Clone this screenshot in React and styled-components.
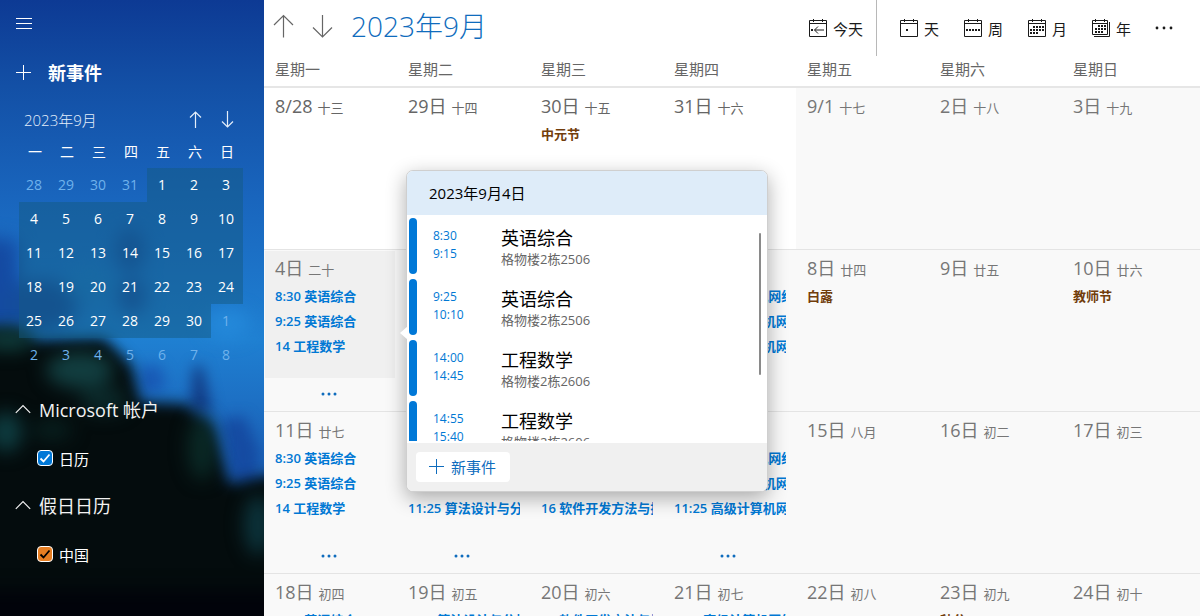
import React, { useState } from "react";
import styled, { createGlobalStyle } from "styled-components";

const GlobalStyle = createGlobalStyle`
  *, *::before, *::after { box-sizing: border-box; }
  body {
    margin: 0;
    background: #fff;
    font-family: "Open Sans", "Noto Sans CJK SC", sans-serif;
    font-size: 15px;
    color: #1a1a1a;
  }
  button {
    font: inherit;
    color: inherit;
    background: none;
    border: 0;
    padding: 0;
    cursor: pointer;
  }
`;

const Page = styled.div`
  display: flex;
  height: 100vh;
  overflow: hidden;
`;

/* ---------- sidebar ---------- */

const Sidebar = styled.aside`
  position: relative;
  flex: 0 0 264px;
  overflow: hidden;
  color: #fff;
  background: #02070c;
`;

const Backdrop = styled.svg`
  position: absolute;
  inset: 0;
  width: 100%;
  height: 100%;
`;

const SidebarBody = styled.div`
  position: relative;
  display: flex;
  flex-direction: column;
`;

const MenuButton = styled.button`
  display: flex;
  align-items: center;
  width: 48px;
  height: 48px;
  padding-left: 16px;
`;

const NewEvent = styled.button`
  display: flex;
  align-items: center;
  gap: 17px;
  height: 48px;
  padding-left: 16px;
  font-size: 18px;
  font-weight: 700;
`;

const MiniHeader = styled.div`
  display: flex;
  align-items: center;
  height: 36px;
  margin-top: 5px;
  padding: 0 21px 0 24px;
  color: #e4eefa;
`;

const MiniTitle = styled.span`
  flex: 1;
  font-weight: 300;
`;

const MiniArrow = styled.button`
  display: flex;
  align-items: center;
  justify-content: center;
  width: 32px;
  height: 32px;
`;

const MiniGrid = styled.div`
  display: grid;
  grid-template-columns: repeat(7, 32px);
  margin-left: 19px;
`;

const MiniWeekday = styled.span`
  height: 31px;
  line-height: 30px;
  text-align: center;
  font-size: 14px;
`;

const MiniDay = styled.button`
  height: 34px;
  padding-right: 2px;
  line-height: 34px;
  text-align: center;
  font-size: 14px;
  color: ${(p) => (p.$current ? "#fff" : "#6fb2ec")};
  background: ${(p) => (p.$current ? "rgba(20, 90, 130, 0.5)" : "transparent")};
`;

const Accounts = styled.div`
  margin-top: 14px;
`;

const AccountHeader = styled.button`
  display: flex;
  align-items: center;
  gap: 8px;
  width: 100%;
  height: 48px;
  padding: 0 0 2px 15px;
  font-size: 18px;
  color: #f2f2f2;
`;

const CalendarOption = styled.label`
  display: flex;
  align-items: center;
  gap: 6px;
  height: 48px;
  padding-left: 37px;
  font-size: 15px;
`;

const CheckWrap = styled.span`
  position: relative;
  display: flex;
  width: 16px;
  height: 16px;
`;

const Check = styled.input`
  appearance: none;
  width: 16px;
  height: 16px;
  margin: 0;
  border: 1px solid #fff;
  border-radius: 4px;
  background: transparent;
  &:checked { background: ${(p) => p.$color}; }
  &:not(:checked) + svg { display: none; }
`;

const CheckMark = styled.svg`
  position: absolute;
  inset: 0;
  pointer-events: none;
`;

/* ---------- main area ---------- */

const Main = styled.main`
  flex: 1;
  min-width: 0;
  display: flex;
  flex-direction: column;
`;

const Toolbar = styled.header`
  display: flex;
  align-items: stretch;
  flex: 0 0 56px;
  padding: 0 22px 0 9px;
`;

const NavButton = styled.button`
  display: flex;
  align-items: center;
  width: 39px;
  padding-bottom: 4px;
`;

const MonthTitle = styled.h1`
  flex: 1;
  margin: 0;
  line-height: 52px;
  font-size: 28px;
  font-weight: 300;
  color: #0f6cbd;
`;

const ToolButton = styled.button`
  display: flex;
  align-items: center;
  gap: 5px;
`;

const TodayBox = styled.div`
  display: flex;
  padding-right: 13px;
  border-right: 1px solid #b8b8b8;
`;

const Views = styled.div`
  display: flex;
  gap: 24px;
  padding: 0 19px 0 22px;
`;

const MoreButton = styled.button`
  display: flex;
  align-items: center;
  justify-content: center;
  width: 28px;
`;

const WeekdayRow = styled.div`
  display: grid;
  grid-template-columns: repeat(7, 1fr);
  flex: 0 0 32px;
  padding-right: 5px;
  border-bottom: 2px solid #e6e6e6;
`;

const Weekday = styled.div`
  padding-left: 11px;
  line-height: 26px;
  color: #666;
`;

const Week = styled.div`
  display: grid;
  grid-template-columns: repeat(7, 1fr);
  flex: 0 0 162px;
  padding-right: 5px;
  background: #f9f9f9;
  border-bottom: 1px solid #e4e4e4;
`;

const DayCell = styled.div`
  position: relative;
  min-width: 0;
  display: flex;
  flex-direction: column;
  background: ${(p) => (p.$shown ? "#fff" : "transparent")};
`;

const DayBody = styled.div`
  flex: 0 0 127px;
  margin: 1px 2px 0 1px;
  padding: 0 8px 0 10px;
  background: ${(p) => (p.$selected ? "#f0f0f0" : "transparent")};
`;

const DayHeading = styled.div`
  display: flex;
  align-items: baseline;
  gap: 5px;
  height: 33px;
  line-height: 34px;
  font-size: 18px;
  color: ${(p) => (p.$shown ? "#666" : "#767676")};
`;

const Lunar = styled.span`
  font-size: 13px;
`;

const Entry = styled.div`
  height: 25px;
  line-height: 25px;
  overflow: hidden;
  white-space: nowrap;
  font-size: 13px;
  font-weight: 600;
  color: ${(p) => (p.$holiday ? "#713d0b" : "#0078d4")};
`;

const MoreEntries = styled.button`
  display: flex;
  align-items: center;
  justify-content: center;
  height: 32px;
  padding-right: 3px;
  color: #0f6cbd;
`;

/* ---------- day popover ---------- */

const Popover = styled.section`
  position: absolute;
  z-index: 2;
  top: -80px;
  left: calc(100% + 9px);
  width: 362px;
  border: 1px solid #cfcfcf;
  border-radius: 7px;
  background: #fff;
  box-shadow: 0 6px 20px rgba(0, 0, 0, 0.32);
`;

const Pointer = styled.svg`
  position: absolute;
  left: -8px;
  top: 155px;
`;

const PopoverTitle = styled.h2`
  margin: 0;
  padding-left: 22px;
  line-height: 44px;
  font-size: 15px;
  font-weight: 400;
  color: #000;
  background: #deecf9;
  border-radius: 6px 6px 0 0;
`;

const Agenda = styled.div`
  position: relative;
  display: flex;
  flex-direction: column;
  gap: 5px;
  height: 226px;
  margin-bottom: 2px;
  padding: 3px 2px 0;
  overflow: hidden;
`;

const AgendaItem = styled.div`
  display: grid;
  grid-template-columns: 8px 52px 1fr;
  column-gap: 16px;
  flex: 0 0 56px;
`;

const AgendaBar = styled.span`
  border-radius: 4px;
  background: #0078d7;
`;

const AgendaTimes = styled.div`
  padding-top: 9px;
  line-height: 18px;
  font-size: 12px;
  color: #0078d4;
`;

const AgendaTitle = styled.div`
  padding-top: 8px;
  line-height: 24px;
  font-size: 18px;
  color: #000;
`;

const AgendaPlace = styled.div`
  line-height: 18px;
  font-size: 13px;
  color: #666;
`;

const ScrollThumb = styled.span`
  position: absolute;
  top: 18px;
  right: 6px;
  width: 2px;
  height: 142px;
  border-radius: 1px;
  background: #8a8a8a;
`;

const PopoverFooter = styled.footer`
  display: flex;
  padding: 9px;
  height: 48px;
  background: #f0f0f0;
  border-radius: 0 0 6px 6px;
`;

const AddButton = styled.button`
  display: flex;
  align-items: center;
  gap: 7px;
  height: 30px;
  padding: 0 14px 2px 13px;
  border-radius: 4px;
  background: #fff;
  color: #0f6cbd;
`;

/* ---------- icons ---------- */

const strokeProps = { fill: "none", stroke: "currentColor", strokeWidth: 1 };

const MenuIcon = () => (
  <svg width="16" height="12" {...strokeProps}>
    <path d="M0 .5h16M0 5.5h16M0 10.5h16" />
  </svg>
);

const PlusIcon = () => (
  <svg width="15" height="15" {...strokeProps}>
    <path d="M0 7.5h15M7.5 0v15" />
  </svg>
);

const SmallArrow = ({ down }) => (
  <svg width="13" height="17" {...strokeProps} strokeWidth="1.2">
    <path d={down ? "M6.5 0v16M1 10.5l5.5 5.5 5.5-5.5" : "M6.5 17V1M1 6.5L6.5 1 12 6.5"} />
  </svg>
);

const LargeArrow = ({ down }) => (
  <svg width="21" height="24" {...strokeProps} stroke="#666" strokeWidth="1.2">
    <path d={down ? "M10.5 1v21.5M1 13.5l9.5 9.5 9.5-9.5" : "M10.5 23.5V1.5M1 11L10.5 1.5 20 11"} />
  </svg>
);

const ChevronUp = () => (
  <svg width="16" height="10" {...strokeProps} strokeWidth="1.2">
    <path d="M.8 8.8L8 1.6l7.2 7.2" />
  </svg>
);

const Dots = ({ gap, radius }) => (
  <svg width={gap * 2 + 6} height="6" fill="currentColor">
    {[0, 1, 2].map((i) => (
      <circle key={i} cx={3 + i * gap} cy="3" r={radius} />
    ))}
  </svg>
);

const marks = {
  today: [[3, 11]],
  day: [[7, 11]],
  week: [3, 6, 9, 12, 15].map((x) => [x, 11]),
  month: [
    [6, 8], [9, 8], [12, 8], [15, 8],
    [3, 11], [6, 11], [9, 11], [12, 11], [15, 11],
    [3, 14], [6, 14], [9, 14],
  ],
  year: [
    [7, 7], [10, 7], [13, 7],
    [4, 10], [7, 10], [10, 10], [13, 10],
    [4, 13], [7, 13], [10, 13],
  ],
};

const CalendarIcon = ({ kind }) => (
  <svg width="20" height="20" {...strokeProps}>
    {kind === "year" ? (
      <path d="M1.5 2.5h15v14h-15zM1.5 5.500h15M4.500 1v3M13.500 1v3M18.500 4v14.500H3" />
    ) : (
      <path d="M1.5 2.5h17v16h-17zM1.5 5.500h17M5.500 1v3M14.500 1v3" />
    )}
    {kind === "today" && <path d="M6.5 12H16M10 8.500L6.500 12l3.500 3.500" />}
    {marks[kind].map(([x, y]) => (
      <rect key={`${x}-${y}`} x={x} y={y} width="2" height="2" fill="currentColor" stroke="none" />
    ))}
  </svg>
);

const SidebarBackdrop = () => (
  <Backdrop viewBox="0 0 264 616" preserveAspectRatio="none" aria-hidden="true">
    <defs>
      <linearGradient id="sky" x1="0" y1="0" x2="0" y2="1">
        <stop offset="0" stopColor="#0d3a94" />
        <stop offset="0.14" stopColor="#1350a6" />
        <stop offset="0.32" stopColor="#1965bd" />
        <stop offset="0.55" stopColor="#1f80d2" />
        <stop offset="0.7" stopColor="#1c68bd" />
        <stop offset="1" stopColor="#1650a0" />
      </linearGradient>
      <filter id="soft" x="-30%" y="-30%" width="160%" height="160%" colorInterpolationFilters="sRGB">
        <feGaussianBlur stdDeviation="9" />
      </filter>
      <filter id="edge" x="-30%" y="-30%" width="160%" height="160%" colorInterpolationFilters="sRGB">
        <feGaussianBlur stdDeviation="7" />
      </filter>
    </defs>
    <rect width="264" height="616" fill="url(#sky)" />
    <g filter="url(#soft)">
      <path d="M-30 235L18 240 22 330-30 330z" fill="#144aa2" />
      <ellipse cx="130" cy="250" rx="15" ry="22" fill="#154fa0" />
      <ellipse cx="40" cy="305" rx="38" ry="26" fill="#144d9c" />
      <ellipse cx="90" cy="285" rx="24" ry="18" fill="#1c78c4" />
      <ellipse cx="132" cy="296" rx="14" ry="18" fill="#154fa0" />
      <ellipse cx="228" cy="324" rx="22" ry="14" fill="#2489da" />
    </g>
    <g filter="url(#edge)">
      <path d="M194 366l8 0 10 46-22 0z" fill="#123a82" />
      <path d="M140 366l20 0 6 22-24 8z" fill="#1858b4" />
      <path d="M222 420l22-4 16 36-4 36-24-6z" fill="#154ba2" />
    </g>
    <path
      filter="url(#edge)"
      d="M-30 326L20 328 36 340 104 338 118 352 132 366 140 402 186 404 208 424 220 456 230 484 300 468V650H-30z"
      fill="#040c0d"
    />
    <g filter="url(#soft)">
      <ellipse cx="80" cy="370" rx="34" ry="18" fill="#123e40" />
      <ellipse cx="104" cy="400" rx="24" ry="14" fill="#0b2829" />
      <ellipse cx="8" cy="340" rx="26" ry="10" fill="#10403f" />
      <ellipse cx="6" cy="432" rx="16" ry="20" fill="#0e3c40" />
      <ellipse cx="52" cy="430" rx="20" ry="10" fill="#08201f" />
      <ellipse cx="202" cy="448" rx="14" ry="32" fill="#0a2926" />
      <ellipse cx="258" cy="525" rx="14" ry="30" fill="#0c333b" />
      <rect x="-20" y="590" width="310" height="60" fill="#01030a" />
    </g>
  </Backdrop>
);

/* ---------- data ---------- */

const weekdays = ["一", "二", "三", "四", "五", "六", "日"];

const miniDays = [
  ...[28, 29, 30, 31].map((n) => ({ n, current: false })),
  ...Array.from({ length: 30 }, (_, i) => ({ n: i + 1, current: true })),
  ...Array.from({ length: 8 }, (_, i) => ({ n: i + 1, current: false })),
];

const monday = ["8:30 英语综合", "9:25 英语综合", "14 工程数学"];
const tuesday = ["8:30 算法设计与分析", "10:25 算法设计与分析", "11:25 算法设计与分析"];
const wednesday = ["14 软件开发方法与技术", "15 软件开发方法与技术", "16 软件开发方法与技术"];
const thursday = ["8:30 高级计算机网络", "10:25 高级计算机网络", "11:25 高级计算机网络"];

const weeks = [
  [
    { day: "8/28", lunar: "十三", shown: true },
    { day: "29日", lunar: "十四", shown: true },
    { day: "30日", lunar: "十五", shown: true, holiday: "中元节" },
    { day: "31日", lunar: "十六", shown: true },
    { day: "9/1", lunar: "十七" },
    { day: "2日", lunar: "十八" },
    { day: "3日", lunar: "十九" },
  ],
  [
    { day: "4日", lunar: "二十", events: monday, more: true, selected: true },
    { day: "5日", lunar: "廿一", events: tuesday, more: true },
    { day: "6日", lunar: "廿二", events: wednesday },
    { day: "7日", lunar: "廿三", events: thursday, more: true },
    { day: "8日", lunar: "廿四", holiday: "白露" },
    { day: "9日", lunar: "廿五" },
    { day: "10日", lunar: "廿六", holiday: "教师节" },
  ],
  [
    { day: "11日", lunar: "廿七", events: monday, more: true },
    { day: "12日", lunar: "廿八", events: tuesday, more: true },
    { day: "13日", lunar: "廿九", events: wednesday },
    { day: "14日", lunar: "三十", events: thursday, more: true },
    { day: "15日", lunar: "八月" },
    { day: "16日", lunar: "初二" },
    { day: "17日", lunar: "初三" },
  ],
  [
    { day: "18日", lunar: "初四", events: monday, more: true },
    { day: "19日", lunar: "初五", events: tuesday, more: true },
    { day: "20日", lunar: "初六", events: wednesday },
    { day: "21日", lunar: "初七", events: thursday, more: true },
    { day: "22日", lunar: "初八" },
    { day: "23日", lunar: "初九", holiday: "秋分" },
    { day: "24日", lunar: "初十" },
  ],
];

const agenda = [
  { from: "8:30", to: "9:15", title: "英语综合", place: "格物楼2栋2506" },
  { from: "9:25", to: "10:10", title: "英语综合", place: "格物楼2栋2506" },
  { from: "14:00", to: "14:45", title: "工程数学", place: "格物楼2栋2606" },
  { from: "14:55", to: "15:40", title: "工程数学", place: "格物楼2栋2606" },
];

const views = [
  { kind: "day", label: "天" },
  { kind: "week", label: "周" },
  { kind: "month", label: "月" },
  { kind: "year", label: "年" },
];

const accounts = [
  { name: "Microsoft 帐户", calendar: "日历", color: "#0078d7", mark: "#fff" },
  { name: "假日日历", calendar: "中国", color: "#e67e22", mark: "#000" },
];

/* ---------- composition ---------- */

function Account({ account }) {
  const [checked, setChecked] = useState(true);
  return (
    <>
      <AccountHeader>
        <ChevronUp />
        {account.name}
      </AccountHeader>
      <CalendarOption>
        <CheckWrap>
          <Check
            type="checkbox"
            $color={account.color}
            checked={checked}
            onChange={() => setChecked(!checked)}
          />
          <CheckMark width="16" height="16" fill="none" stroke={account.mark} strokeWidth="1.8">
            <path d="M3.5 8.5l3 3L12.5 4.500" />
          </CheckMark>
        </CheckWrap>
        {account.calendar}
      </CalendarOption>
    </>
  );
}

function DayPopover() {
  return (
    <Popover aria-label="2023年9月4日">
      <Pointer width="9" height="14">
        <path d="M9 0L1 7l8 7z" fill="#fff" />
      </Pointer>
      <PopoverTitle>2023年9月4日</PopoverTitle>
      <Agenda>
        {agenda.map((item) => (
          <AgendaItem key={item.from}>
            <AgendaBar />
            <AgendaTimes>
              <div>{item.from}</div>
              <div>{item.to}</div>
            </AgendaTimes>
            <div>
              <AgendaTitle>{item.title}</AgendaTitle>
              <AgendaPlace>{item.place}</AgendaPlace>
            </div>
          </AgendaItem>
        ))}
        <ScrollThumb />
      </Agenda>
      <PopoverFooter>
        <AddButton>
          <PlusIcon />
          新事件
        </AddButton>
      </PopoverFooter>
    </Popover>
  );
}

function Day({ day, lunar, holiday, events = [], more, shown, selected }) {
  return (
    <DayCell $shown={shown}>
      <DayBody $selected={selected}>
        <DayHeading $shown={shown}>
          {day}
          <Lunar>{lunar}</Lunar>
        </DayHeading>
        {holiday && <Entry $holiday>{holiday}</Entry>}
        {events.map((e) => (
          <Entry key={e}>{e}</Entry>
        ))}
      </DayBody>
      {more && (
        <MoreEntries aria-label="更多事件">
          <Dots gap={6} radius={1.5} />
        </MoreEntries>
      )}
      {selected && <DayPopover />}
    </DayCell>
  );
}

export default function App() {
  return (
    <Page lang="zh-CN">
      <GlobalStyle />
      <Sidebar>
        <SidebarBackdrop />
        <SidebarBody>
          <MenuButton aria-label="菜单">
            <MenuIcon />
          </MenuButton>
          <NewEvent>
            <PlusIcon />
            新事件
          </NewEvent>
          <MiniHeader>
            <MiniTitle>2023年9月</MiniTitle>
            <MiniArrow aria-label="上个月">
              <SmallArrow />
            </MiniArrow>
            <MiniArrow aria-label="下个月">
              <SmallArrow down />
            </MiniArrow>
          </MiniHeader>
          <MiniGrid>
            {weekdays.map((w) => (
              <MiniWeekday key={w}>{w}</MiniWeekday>
            ))}
            {miniDays.map((d, i) => (
              <MiniDay key={i} $current={d.current}>
                {d.n}
              </MiniDay>
            ))}
          </MiniGrid>
          <Accounts>
            {accounts.map((a) => (
              <Account key={a.name} account={a} />
            ))}
          </Accounts>
        </SidebarBody>
      </Sidebar>
      <Main>
        <Toolbar>
          <NavButton aria-label="上个月">
            <LargeArrow />
          </NavButton>
          <NavButton aria-label="下个月">
            <LargeArrow down />
          </NavButton>
          <MonthTitle>2023年9月</MonthTitle>
          <TodayBox>
            <ToolButton>
              <CalendarIcon kind="today" />
              今天
            </ToolButton>
          </TodayBox>
          <Views>
            {views.map((v) => (
              <ToolButton key={v.kind}>
                <CalendarIcon kind={v.kind} />
                {v.label}
              </ToolButton>
            ))}
          </Views>
          <MoreButton aria-label="更多">
            <Dots gap={7} radius={1.4} />
          </MoreButton>
        </Toolbar>
        <WeekdayRow>
          {weekdays.map((w) => (
            <Weekday key={w}>星期{w}</Weekday>
          ))}
        </WeekdayRow>
        {weeks.map((week) => (
          <Week key={week[0].day}>
            {week.map((d) => (
              <Day key={d.day} {...d} />
            ))}
          </Week>
        ))}
      </Main>
    </Page>
  );
}
